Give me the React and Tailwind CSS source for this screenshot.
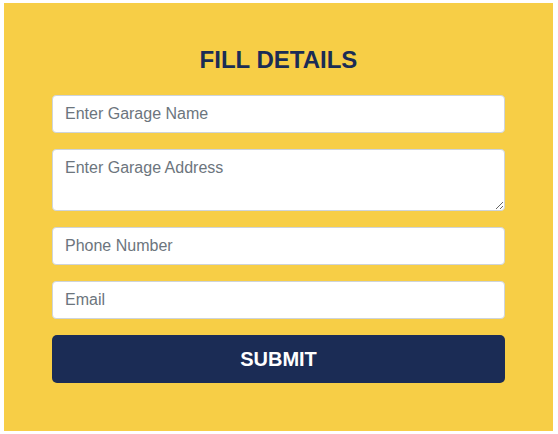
import React from 'react';

const fieldClass =
  'block w-full rounded border border-[#ced4da] bg-white px-3 py-1.5 text-base leading-6 text-[#495057] placeholder:text-[#6c757d] outline-none';

const App = () => {
  return (
    <div className="min-h-screen bg-white pt-[3px] pl-[4px] font-['Liberation_Sans',Arial,sans-serif]">
      <div className="w-[549px] h-[428px] bg-[#f7ce46] px-12 pt-[43px]">
        <h4 className="text-center text-2xl leading-7 font-bold text-[#1b2c55] mb-[21px]">
          FILL DETAILS
        </h4>
        <form className="flex flex-col gap-4" onSubmit={(e) => e.preventDefault()}>
          <input type="text" placeholder="Enter Garage Name" className={fieldClass} />
          <textarea rows={2} placeholder="Enter Garage Address" className={fieldClass} />
          <input type="text" placeholder="Phone Number" className={fieldClass} />
          <input type="email" placeholder="Email" className={fieldClass} />
          <button
            type="submit"
            className="w-full h-12 rounded-[5px] bg-[#1b2c55] text-white text-xl font-bold leading-[30px]"
          >
            SUBMIT
          </button>
        </form>
      </div>
    </div>
  );
};

export default App;
